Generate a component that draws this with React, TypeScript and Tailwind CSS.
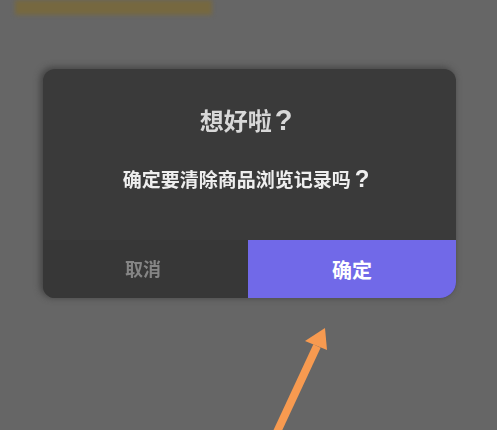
const font = '[font-family:"Liberation_Sans","Noto_Sans_CJK_SC",sans-serif]';

/* ── Confirm Dialog ── */
function ConfirmDialog() {
  return (
    <div className="ml-[43px] mt-[54px] w-[413px] h-[229px] flex flex-col rounded-[12px] rounded-br-[16px] bg-[#3a3a3a] shadow-[-2px_-1px_6px_1px_rgba(55,55,55,0.7)] overflow-hidden">
      <div className="flex-1 flex flex-col items-center pr-[7px]">
        <h2 className="mt-[35px] h-[32px] leading-[32px] text-[24px] font-bold text-[#d8d8d8] blur-[0.4px]">
          想好啦<span className="ml-[3px] text-[29px] font-bold">?</span>
        </h2>
        <p className="mt-[29px] h-[28px] leading-[28px] text-[19px] font-bold text-[#eeeeee] blur-[0.3px]">
          确定要清除商品浏览记录吗<span className="ml-[4px] text-[24px] font-bold">?</span>
        </p>
      </div>
      <div className="flex h-[58px] shrink-0">
        <button className="w-[205px] text-left pl-[82px] pt-[3px] text-[18px] font-bold text-[#858585] bg-[#373737] blur-[0.3px]">取消</button>
        <button className="flex-1 text-left pl-[84px] pt-[3px] text-[20px] font-bold text-white bg-[#7169e8]">确定</button>
      </div>
    </div>
  );
}

export default function App() {
  return (
    <div className={`relative w-[497px] h-[430px] overflow-hidden bg-[#666666] ${font}`}>
      {/* bar behind the overlay */}
      <div className="ml-[15px] w-[197px] h-[15px] bg-[#766840] blur-[2px]" />
      <ConfirmDialog />
      {/* arrow */}
      <svg className="absolute left-[265px] top-[320px]" width="75" height="110" viewBox="265 320 75 110">
        <path d="M277 432 L317 346" stroke="#f79a50" strokeWidth="8" fill="none" />
        <path d="M325 328 L305 341 L327 350 Z" fill="#f79a50" />
      </svg>
    </div>
  );
}
